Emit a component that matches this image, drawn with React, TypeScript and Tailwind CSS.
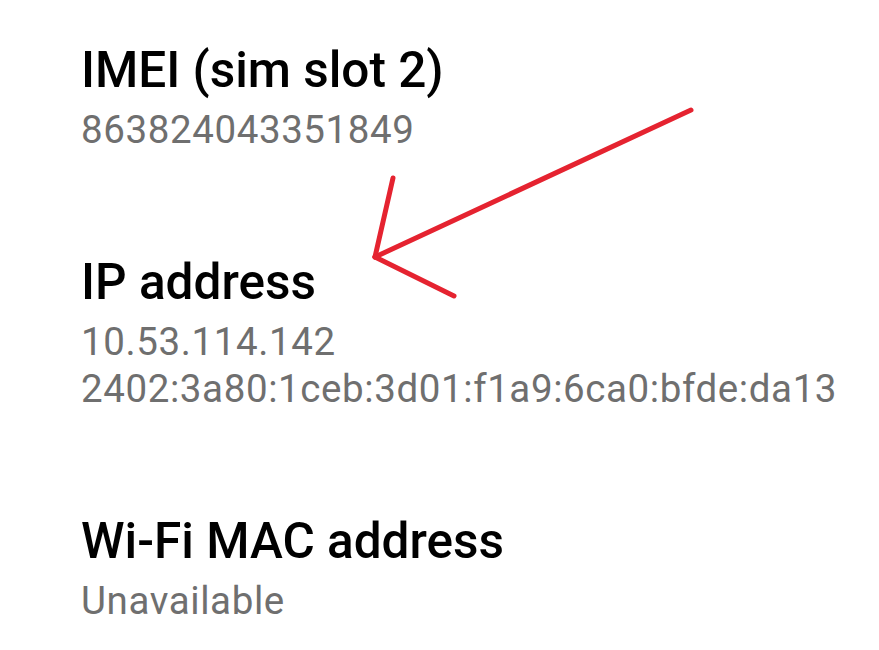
const items = [
  { title: 'IMEI (sim slot 2)', lines: ['863824043351849'] },
  { title: 'IP address', lines: ['10.53.114.142', '2402:3a80:1ceb:3d01:f1a9:6ca0:bfde:da13'] },
  { title: 'Wi-Fi MAC address', lines: ['Unavailable'] },
]

export default function App() {
  return (
    <div className="relative h-[650px] w-[879px] overflow-hidden bg-white font-['Roboto',sans-serif]">
      <div className="flex flex-col gap-[101px] pl-[81px] pt-[42px]">
        {items.map((item) => (
          <div key={item.title}>
            <div className="text-[49.5px] leading-[56px] font-medium text-black">{item.title}</div>
            <div className="mt-[8px] text-[38.5px] leading-[47px] tracking-[0.6px] text-[#6f6f6f]">
              {item.lines.map((line) => (
                <div key={line}>{line}</div>
              ))}
            </div>
          </div>
        ))}
      </div>

      {/* red annotation arrow */}
      <svg className="pointer-events-none absolute inset-0" width="879" height="650">
        <g stroke="#e52330" strokeWidth="5" strokeLinecap="round" fill="none">
          <line x1="691" y1="110" x2="375" y2="257" />
          <line x1="375" y1="257" x2="393" y2="178" />
          <line x1="375" y1="257" x2="454" y2="296" />
        </g>
      </svg>
    </div>
  )
}
